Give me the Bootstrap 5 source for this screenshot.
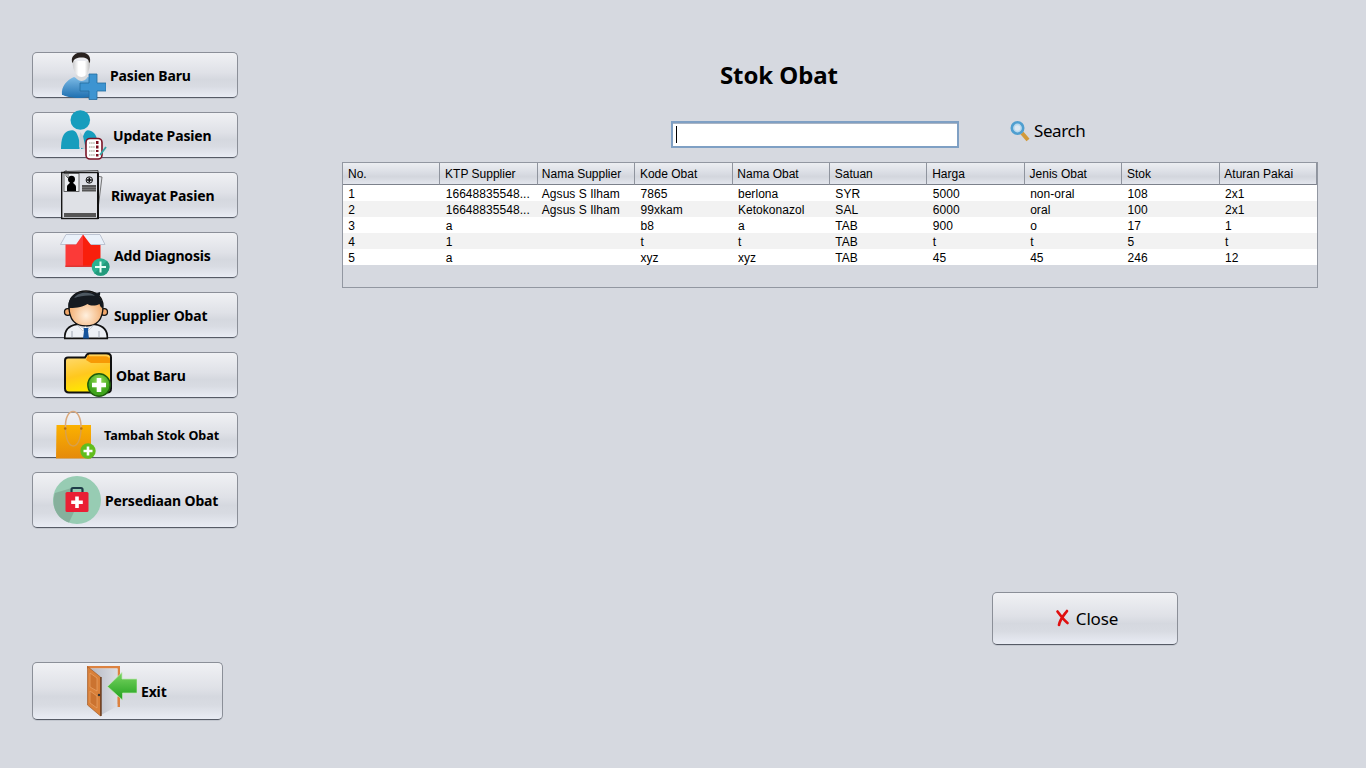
<!DOCTYPE html>
<html lang="id">
<head>
<meta charset="utf-8">
<meta name="viewport" content="width=device-width, initial-scale=1">
<title>Stok Obat</title>
<link href="https://cdn.jsdelivr.net/npm/bootstrap@5.3.0/dist/css/bootstrap.min.css" rel="stylesheet">
<style>
  body { background: #d6d9e0; color: #000; font-family: "Noto Sans", "Open Sans", sans-serif; height: 768px; overflow: hidden; }
  .side-menu { width: 238px; padding: 52px 0 0 32px; }
  .menu-stack { gap: 14px; }
  .nimbus {
    --bs-btn-color: #000; --bs-btn-hover-color: #000; --bs-btn-line-height: 1; --bs-btn-padding-x: 0; --bs-btn-padding-y: 0;
    height: 46px; border: 1px solid #8b8f98; border-bottom-color: #565b66; border-radius: 5px;
    background: linear-gradient(#f0f1f4 0%, #dfe1e7 45%, #d5d8df 60%, #d8dbe2 75%, #e9ecf4 100%);
    box-shadow: 0 1px 0 #c3c7cf; font-weight: 700; font-size: 14px; letter-spacing: -.16px; white-space: nowrap;
  }
  .nimbus svg { width: 52px; height: 56px; margin: -6px 4px -6px 0; flex: none; }
  .side-menu .nimbus span { padding-top: 2px; }
  .side-menu .nimbus .menu-small { font-size: 12.6px; letter-spacing: 0; }
  .tall { height: 56px; }
  .exit-btn { width: 191px; height: 58px; margin-top: 134px; }
  .close-btn { width: 186px; height: 53px; margin: 304px 0 0 650px; padding-left: 3px; font-weight: 400; font-size: 17px; }
  .close-btn svg { width: 16px; height: 18px; margin: -2px 5px 0 0; }
  .main-pane { padding: 57px 48px 0 104px; }
  .page-title { font-size: 24px; font-weight: 700; line-height: 36px; margin: 0 0 28px 378px; letter-spacing: -.1px; }
  .search-row { height: 27px; margin-bottom: 14px; padding-left: 329px; }
  .search-box { width: 288px; height: 27px; padding: 0 3px; border: 2px solid #7fa0c4; border-radius: 0; background: #fff; box-shadow: inset 0 1px 0 #a9b4c4; }
  .caret { width: 1px; height: 17px; background: #000; }
  .search-label { font-size: 17px; line-height: 20px; letter-spacing: -.4px; margin-left: 50px; margin-top: -7px; }
  .search-label span { margin-left: 3px; }
  .grid-frame { height: 126px; border: 1px solid #9297a1; }
  .stock { table-layout: fixed; width: 100%; margin: 0; font: 12px/16px "Liberation Sans", Arial, sans-serif; border-collapse: separate; border-spacing: 0; color: #000; }
  .stock th { font-weight: 400; height: 22px; padding: 0 0 0 5px; border-right: 1px solid #8f949e; border-bottom: 1px solid #7c818b; background: linear-gradient(#eceef2, #d9dce3 50%, #d3d6dd 65%, #e3e6ed); white-space: nowrap; }
  .stock th:nth-child(n+2) { padding-left: 4.700px; }
  .stock td { height: 16px; padding: 2px 0 0 5.300px; line-height: 14px; background: #fff; white-space: nowrap; overflow: hidden; letter-spacing: .05px; }
  .stock th:nth-child(3), .stock td:nth-child(3) { padding-left: 4px; }
  .stock tr:nth-child(even) td { background: #f2f2f2; }
</style>
</head>
<body>
<div class="d-flex h-100">
  <nav class="side-menu flex-shrink-0">
    <div class="menu-stack d-flex flex-column">
      <button class="btn nimbus d-flex align-items-center" style="padding-left:21px">
        <svg viewBox="54 47 52 56"><defs><linearGradient id="bl" x2="0" y2="1"><stop stop-color="#7dbbe6"/><stop offset="1" stop-color="#1d6fb0"/></linearGradient><linearGradient id="face" x2="1"><stop stop-color="#c9c9cb"/><stop offset=".35" stop-color="#fff"/><stop offset=".7" stop-color="#fff"/><stop offset="1" stop-color="#bbb"/></linearGradient></defs>
          <path d="M62 95C61 86 67 80 74 77l6 3 8-3c7 3 9 9 9 18-9 4-27 4-34 0z" fill="url(#bl)"/>
          <path d="M76 70h11v8c-3 4-8 4-11 0z" fill="#d9dadc"/>
          <path d="M72.500 61h17.500c0 6-1 10-3 13-3 4-8 4-11 0-2-3-3.500-7-3.500-13z" fill="url(#face)"/>
          <path d="M72 62c-2.500-12 20.500-13 18 0l-1 1c0-4-3-5.500-7.500-5.500S73 59 73 63z" fill="#29221f"/>
          <path d="M89 74h8v9h9v8h-9v8.500h-8V91h-9v-8h9z" fill="#3d94d1" stroke="#236c9f" stroke-width=".8"/></svg>
        <span>Pasien Baru</span></button>
      <button class="btn nimbus d-flex align-items-center" style="padding-left:24px">
        <svg viewBox="57 107 52 56"><circle cx="80.300" cy="120" r="9.800" fill="#179dbd"/><path d="M61 149c0-10 2-16 7-18 5-1.500 7-1 9 3 2 4 3 9 2.500 15z" fill="#179dbd"/><path d="M98 149c0-10-2-16-7-18-4-1.500-5-1-7 3-2 4-3 9-3 15z" fill="#179dbd"/><path d="M80 132l-1 15 7 3-3-14z" fill="#c9ced4"/>
          <rect x="86" y="138.500" width="16" height="20.500" rx="4" fill="#fff" stroke="#7b1426" stroke-width="1.600"/><path d="M89 143h6M89 147h6M89 151h6M89 155h6" stroke="#776" stroke-width=".8" stroke-dasharray="1.500 .6"/><path d="M96 141h2.500v3H96zM96 145.500h2.500v3H96zM96 150h2.500v2H96zM96 154h2.500v2.500H96z" fill="#7b1020"/><path d="M100 155l6-8" stroke="#35a6a6" stroke-width="1.800"/></svg>
        <span>Update Pasien</span></button>
      <button class="btn nimbus d-flex align-items-center" style="padding-left:22px">
        <svg viewBox="55 167 52 56"><path d="M97 176l5 1-5 40z" fill="#dfe1e6" stroke="#555" stroke-width=".8"/><path d="M64 171.500l34-1v46z" fill="#dcdee3" stroke="#333" stroke-width=".8"/><rect x="61.700" y="172.500" width="36" height="46" fill="#dfe1e6" stroke="#161616" stroke-width="1.400"/><path d="M98 173v46" stroke="#111" stroke-width="2"/>
          <rect x="64" y="173.500" width="15" height="18" fill="#eceef1" stroke="#444" stroke-width=".8"/><circle cx="71.500" cy="179.300" r="3.500"/><path d="M67 191v-4c0-3 3-3 3-5h3c0 2 3 2 3 5v4z"/><path d="M66 170v6l2 2v-7" fill="none" stroke="#444" stroke-width=".8"/>
          <circle cx="89.300" cy="180" r="3.200" fill="none" stroke="#111"/><path d="M89.300 177.500v5M86.800 180h5" stroke="#111" stroke-width="1.500"/><path d="M82 185h14v6.500H82z" fill="#555"/><path d="M82 187.500h14M82 189.500h14" stroke="#999" stroke-width=".5"/><path d="M64 213h32v4H64z" fill="#555"/></svg>
        <span>Riwayat Pasien</span></button>
      <button class="btn nimbus d-flex align-items-center" style="padding-left:25px">
        <svg viewBox="58 227 52 56"><path d="M66 234.500h34l5 10H60.500z" fill="#eaf1fa" stroke="#b0b8c8" stroke-width=".8"/><path d="M65.500 244.500H76L83 234.500V267H65.500z" fill="#fb3a38"/><path d="M83 234.500L91 245h9.500v22H83z" fill="#f91f0c"/><path d="M65.500 265.500h35v1.500h-35z" fill="#dd3532"/>
          <circle cx="100.500" cy="267" r="8.800" fill="#2cb291"/><path d="M94.500 273.200a8.800 8.800 0 0 0 12.500-12.400z" fill="#229a7c"/><path d="M100.500 261.500v11M95 267h11" stroke="#e9fff8" stroke-width="2"/></svg>
        <span>Add Diagnosis</span></button>
      <button class="btn nimbus d-flex align-items-center" style="padding-left:25px">
        <svg viewBox="58 287 52 56"><defs><radialGradient id="skin" cy=".7"><stop stop-color="#fff0de"/><stop offset="1" stop-color="#f3b074"/></radialGradient></defs>
          <path d="M64.800 338.300c-.5-10 5-13 12-14h18c7 1 13 4 12.500 14z" fill="#edf0f5" stroke="#111" stroke-width="1.700"/><circle cx="67.800" cy="312" r="3.300" fill="#f1a76a" stroke="#111" stroke-width="1.300"/><circle cx="104.200" cy="312" r="3.300" fill="#f1a76a" stroke="#111" stroke-width="1.300"/><path d="M69 306c0-20 34-20 34 0 0 13-6 20-17 20s-17-7-17-20z" fill="url(#skin)" stroke="#111" stroke-width="1.300"/>
          <path d="M68.500 308c-1-10 6-16 16-16.500 6-.4 11 2 12 2l3.500-1.500c.5 2 0 3.500-1 4.500 3 3 4.500 7 4 11.500-2 0-3-2-3.500-4-4 2-9 2-12 0-6 4-14 4-19 4z" fill="#151a20"/><path d="M74 298c4-6 16-7 21-2-7-1-15 0-21 2z" fill="#4d5861"/>
          <path d="M77 325l6 3 2.500-1.500 2.500 1.500 6-3-6 6-2.500-2-2.500 2z" fill="#fff" stroke="#a9b0bb" stroke-width=".5"/><path d="M83.500 328h5l-.5 3 1 7.500h-6l1-7.500z" fill="#15539b"/><path d="M72 331v7M99 331v7" stroke="#8f98a5" stroke-width=".8"/></svg>
        <span>Supplier Obat</span></button>
      <button class="btn nimbus d-flex align-items-center" style="padding-left:27px">
        <svg viewBox="60 347 52 56"><defs><linearGradient id="fold" x2=".3" y2="1"><stop stop-color="#ffdc7c"/><stop offset=".6" stop-color="#ffc81e"/><stop offset="1" stop-color="#ffe800"/></linearGradient><radialGradient id="gr" cy=".3"><stop stop-color="#9be05b"/><stop offset="1" stop-color="#3fa51c"/></radialGradient></defs>
          <path d="M68 357.500h17l2-3q1-1 3-1h17q4 0 4 4v31q0 4-4 4H69q-4 0-4-4v-28q0-3 3-3z" fill="url(#fold)" stroke="#111" stroke-width="2"/><path d="M88 355h18q4 0 4 4v4H91l-5-3z" fill="#f79a05"/><path d="M89 355.500h17q2.500 0 3.500 2" fill="none" stroke="#ffd257" stroke-width="1.500"/>
          <circle cx="99" cy="385" r="11.200" fill="url(#gr)" stroke="#1d5c0c" stroke-width="1.400"/><path d="M96.700 378h4.600v4.700h4.700v4.600h-4.700v4.700h-4.600v-4.700H92v-4.600h4.700z" fill="#fff"/></svg>
        <span>Obat Baru</span></button>
      <button class="btn nimbus d-flex align-items-center" style="padding-left:15px">
        <svg viewBox="48 407 52 56"><defs><linearGradient id="bag" x2="0" y2="1"><stop stop-color="#fbb100"/><stop offset="1" stop-color="#e58a0b"/></linearGradient></defs><path d="M56.500 425H91v33.500H56z" fill="url(#bag)"/><path d="M65.500 428c-1-22 16-22 15.500 0" fill="none" stroke="#d9a87c" stroke-width="1.500"/><path d="M65.500 428c0 24 15.500 24 15.500 0" fill="none" stroke="#d9a04a" stroke-width="1.500"/>
          <circle cx="65.200" cy="428.500" r="1.300" fill="#b46f12"/><circle cx="81.300" cy="428.500" r="1.300" fill="#b46f12"/><circle cx="88" cy="451" r="7.700" fill="#61bd1d"/><path d="M88 446.500v9M83.500 451h9" stroke="#fff" stroke-width="2.600"/></svg>
        <span class="menu-small">Tambah Stok Obat</span></button>
      <button class="btn nimbus tall d-flex align-items-center" style="padding-left:16px">
        <svg viewBox="49 472 52 56"><circle cx="77" cy="500" r="24" fill="#97ccb3"/><path d="M70 488.500L55 493c-4 11 0 25 14 29.500l5-10.500z" fill="#86b09c"/><path d="M71.500 493v-3.500q0-1.500 1.500-1.500h8q1.500 0 1.500 1.500v3.500" fill="none" stroke="#1f3c48" stroke-width="2.200"/><rect x="65.500" y="492" width="23" height="20" rx="1.500" fill="#ea1f34"/><path d="M77 496.500v11.500M71.200 502.300h11.600" stroke="#fff" stroke-width="3.600"/></svg>
        <span>Persediaan Obat</span></button>
    </div>
    <button class="btn nimbus exit-btn d-flex align-items-center" style="padding-left:52px">
      <svg viewBox="85 663 52 56"><defs><linearGradient id="arr" x2="0" y2="1"><stop stop-color="#7bd563"/><stop offset="1" stop-color="#1fa01d"/></linearGradient><linearGradient id="room" x2="1"><stop stop-color="#b4b7c2"/><stop offset="1" stop-color="#dcdee4"/></linearGradient></defs><path d="M87 666h33v38h-2.500v-35.500H87z" fill="#dc8240"/><path d="M89 668.500h28.500V706L101 715z" fill="url(#room)"/><path d="M87.500 666.500L100.500 677v39L87.500 705z" fill="#d98039" stroke="#9a5220" stroke-width=".6"/><path d="M90 673l7 5v13l-7-4zM90 691l7 5v12l-7-5z" fill="#cb7330" stroke="#eaa468" stroke-width=".7"/><path d="M101 677v39" stroke="#5e2d0e" stroke-width="1.300"/><circle cx="99" cy="695" r="1.200" fill="#333"/><path d="M118.800 697v10" stroke="#dc8240" stroke-width="2.400"/>
        <path d="M107.500 686.500L122 672.500v6.500h15v14h-14.500v7z" fill="url(#arr)" stroke="#bfe8b5" stroke-width=".7"/></svg>
      <span>Exit</span></button>
  </nav>
  <main class="main-pane flex-grow-1">
    <h1 class="page-title">Stok Obat</h1>
    <div class="search-row d-flex align-items-center">
      <div class="search-box d-flex align-items-center" role="textbox"><span class="caret"></span></div>
      <div class="search-label d-flex align-items-center">
        <svg width="22" height="22" viewBox="1009 120 22 22"><path d="M1022 133l6 7" stroke="#d29a3a" stroke-width="4"/><circle cx="1017.500" cy="128" r="5.700" fill="#b9d9ee" stroke="#4f9fd0" stroke-width="2.600"/><circle cx="1017.500" cy="128" r="2.800" fill="#dce8f2"/></svg>
        <span>Search</span></div>
    </div>
    <div class="grid-frame">
      <table class="stock">
        <thead><tr><th>No.</th><th>KTP Supplier</th><th>Nama Supplier</th><th>Kode Obat</th><th>Nama Obat</th><th>Satuan</th><th>Harga</th><th>Jenis Obat</th><th>Stok</th><th>Aturan Pakai</th></tr></thead>
        <tbody>
          <tr><td>1</td><td>16648835548...</td><td>Agsus S Ilham</td><td>7865</td><td>berlona</td><td>SYR</td><td>5000</td><td>non-oral</td><td>108</td><td>2x1</td></tr>
          <tr><td>2</td><td>16648835548...</td><td>Agsus S Ilham</td><td>99xkam</td><td>Ketokonazol</td><td>SAL</td><td>6000</td><td>oral</td><td>100</td><td>2x1</td></tr>
          <tr><td>3</td><td>a</td><td></td><td>b8</td><td>a</td><td>TAB</td><td>900</td><td>o</td><td>17</td><td>1</td></tr>
          <tr><td>4</td><td>1</td><td></td><td>t</td><td>t</td><td>TAB</td><td>t</td><td>t</td><td>5</td><td>t</td></tr>
          <tr><td>5</td><td>a</td><td></td><td>xyz</td><td>xyz</td><td>TAB</td><td>45</td><td>45</td><td>246</td><td>12</td></tr>
        </tbody>
      </table>
    </div>
    <button class="btn nimbus close-btn d-flex align-items-center justify-content-center">
      <svg viewBox="1055 609 16 18"><path d="M1057.500 611.500c3 4 6 8.500 10 11.500M1067 611c-3 4-7 8-8 14" fill="none" stroke="#e01010" stroke-width="2.700" stroke-linecap="round"/></svg>
      <span>Close</span></button>
  </main>
</div>
<script src="https://cdn.jsdelivr.net/npm/bootstrap@5.3.0/dist/js/bootstrap.bundle.min.js"></script>
</body>
</html>
